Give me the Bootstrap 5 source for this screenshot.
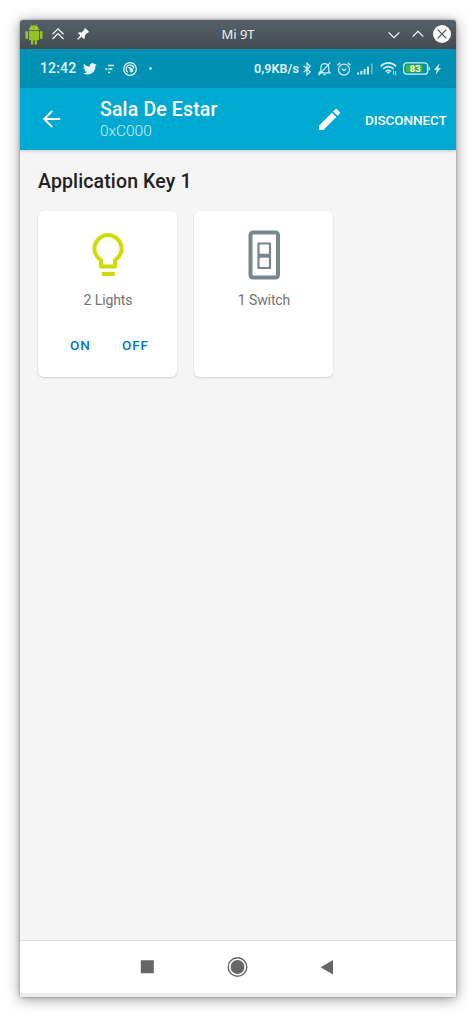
<!DOCTYPE html>
<html lang="en">
<head>
<meta charset="utf-8">
<meta name="viewport" content="width=device-width, initial-scale=1">
<title>Mi 9T</title>
<link href="https://cdn.jsdelivr.net/npm/bootstrap@5.3.0/dist/css/bootstrap.min.css" rel="stylesheet">
<style>
body{font-family:Roboto,"Liberation Sans",sans-serif;background:#fff}
svg{display:block;flex:none}
.stage{padding:20px;height:1017px;overflow:hidden}
.phone{width:436px;height:977px;border-radius:3px 3px 1px 1px;box-shadow:0 2px 14px rgba(0,0,0,.42),0 0 3px rgba(0,0,0,.35);background:#f5f5f5;overflow:hidden}
.titlebar{height:29px;background:linear-gradient(#566067,#454c54);color:#fcfcfc;padding:0 5px}
.titlebar .side{width:190px}
.titlebar .caption{font:13px/29px "Noto Sans",sans-serif;color:#eff0f1;width:46px}
.status{height:39px;background:#0090b4;color:#e3f5f9;padding:0 15px 0 20px}
.clock{font-size:14px;font-weight:500;letter-spacing:.15px;width:43px;line-height:39px}
.speed{font-size:12.5px;font-weight:600;letter-spacing:.1px;width:50px;line-height:39px}
.toolbar{height:62px;background:#00a9d1;color:#fff;padding:0 8px 0 20px;position:relative;box-shadow:0 1px 3px rgba(0,0,0,.2)}
.toolbar h1{font-size:19.5px;font-weight:500;line-height:23px;letter-spacing:.15px;margin:0}
.toolbar .sub{font-size:15.5px;font-weight:300;line-height:20px;color:#d0f1f8;letter-spacing:-.05px}
.headings{margin-left:38px;padding-top:1px}
.disconnect{font-size:13.5px;font-weight:500;line-height:20px;letter-spacing:-.1px;width:83px;margin:1px 0 0 25px;white-space:nowrap}
.content-area{padding:20px 17px 0 18px}
.content-area h2{font-size:19.5px;font-weight:500;line-height:24px;letter-spacing:.13px;color:#212121;margin:0 0 17px}
.tile{width:139px;height:166px;border:0;border-radius:6px;background:#fff;box-shadow:0 1px 2px rgba(0,0,0,.17);padding-top:14px}
.tile .label{font-size:14px;line-height:20px;letter-spacing:-.1px;color:#737373;margin-top:5px;padding-left:1px}
.tile .act{font-size:13.5px;font-weight:500;line-height:20px;letter-spacing:.95px;color:#0077c0;padding:0;border:0;background:none}
.navkeys{height:57px;background:#fff;border-top:1px solid #e0e0e0;border-bottom:4px solid #ededed;padding-left:120px}
</style>
</head>
<body>
<div class="stage">
<div class="phone d-flex flex-column">
  <header class="titlebar d-flex align-items-center justify-content-between">
    <div class="side d-flex align-items-center">
      <svg width="18" height="21" viewBox="0 0 18 21" fill="#97c024"><path d="M4 6.200C4 3.700 5.400 2.300 6.500 1.700L5.400.3l.4-.3L7 1.500a6 6 0 0 1 4 0L12.200 0l.4.3-1.100 1.400c1.100.6 2.500 2 2.500 4.500zM4 7h10v8.300q0 1-1 1h-1V20q0 .8-1.100.8T9.700 20v-3.700H8.300V20q0 .8-1.200.8T6 20v-3.700H5q-1 0-1-1z"/><rect x=".4" y="7" width="2.700" height="8" rx="1.200"/><rect x="14.900" y="7" width="2.700" height="8" rx="1.200"/><circle cx="6.800" cy="4" r=".55" fill="#fff"/><circle cx="11.200" cy="4" r=".55" fill="#fff"/></svg>
      <svg style="margin:-1px 0 0 9px" width="12" height="12" viewBox="0 0 12 12" fill="none" stroke="#fcfcfc" stroke-width="1.200"><path d="M.5 6.300 6 .9l5.500 5.400M.5 11 6 5.600 11.500 11"/></svg>
      <svg style="margin:-2px 0 0 13px" width="12" height="12" viewBox="0 0 12 12" fill="#fcfcfc"><path d="M8.200 0 12 3.700l-1.100 1.200-.6-.2-2.500 2.900.1 2.500-1 .9-2.300-2.200-3.700 3-.7-.7 3.100-3.600L1.100 5.300l.9-1 2.700.1L7.300 1.800 7.100 1z"/></svg>
    </div>
    <div class="caption text-center text-nowrap">Mi 9T</div>
    <div class="side d-flex align-items-center justify-content-end">
      <svg width="12" height="8" viewBox="0 0 12 8" fill="none" stroke="#fcfcfc" stroke-width="1.200"><path d="M.6 1.300 6 6.700l5.400-5.400"/></svg>
      <svg style="margin:-1px 0 0 12px" width="12" height="8" viewBox="0 0 12 8" fill="none" stroke="#fcfcfc" stroke-width="1.200"><path d="M.6 6.700 6 1.300l5.400 5.400"/></svg>
      <svg style="margin:-1px 0 0 9px" width="18" height="18" viewBox="0 0 18 18"><circle cx="9" cy="9" r="9" fill="#fcfcfc"/><path d="m4.700 4.700 8.600 8.600m0-8.600-8.600 8.600" stroke="#4b535b" stroke-width="1.200"/></svg>
    </div>
  </header>

  <div class="status d-flex align-items-center">
    <div class="clock text-nowrap">12:42</div>
    <svg width="14" height="12" viewBox="0 0 24 20" fill="#e3f5f9"><path d="M23.600 2.400a9 9 0 0 1-2.700.8A4.800 4.800 0 0 0 23 .5a9 9 0 0 1-3 1.200 4.800 4.800 0 0 0-8.300 4.400A13.600 13.600 0 0 1 1.700 1a4.800 4.800 0 0 0 1.500 6.500A4.800 4.800 0 0 1 1 6.900c0 2.400 1.600 4.300 3.800 4.800a5 5 0 0 1-2.100.1 4.800 4.800 0 0 0 4.500 3.400A9.700 9.700 0 0 1 .1 17.100 13.600 13.600 0 0 0 21.200 5z"/></svg>
    <svg style="margin-left:8px" width="10" height="10" viewBox="0 0 10 10" fill="none" stroke="#e3f5f9" stroke-width="1.700"><path d="M3 1.500h6M.4 5h2M3.500 5H7.500M3.200 8.500h2"/></svg>
    <svg style="margin-left:8px" width="14" height="14" viewBox="0 0 14 14" fill="none" stroke="#e3f5f9"><circle cx="7" cy="7" r="6.300" stroke-width="1.300"/><path d="M4.800 10.300A4 4 0 0 1 6 3.200c2-.5 4.500.6 4.900 3.200" stroke-width="1.300"/><path d="M4.600 5.200c2-.7 4.600.2 6 3.100-.5 1.200-1.300 2-2.400 2.400L5.900 8.300l2.200.3z" fill="#e3f5f9" stroke="none"/></svg>
    <svg style="margin-left:12px" width="3" height="3" viewBox="0 0 3 3"><circle cx="1.500" cy="1.500" r="1.300" fill="#e3f5f9"/></svg>
    <div class="speed text-nowrap ms-auto">0,9KB/s</div>
    <svg style="margin-left:-1px" width="8" height="14" viewBox="0 0 8 14" fill="none" stroke="#d4f0f6" stroke-width="1.200"><path d="m.6 3.800 6.600 6L4 13V1l3.200 3.200-6.600 6"/></svg>
    <svg style="margin-left:7px" width="13" height="14" viewBox="0 0 13 14" fill="none" stroke="#d4f0f6" stroke-width="1.200"><path d="M1 10.900h11L10.700 9V5.600C10.700 3.200 9 1.700 6.800 1.700S2.900 3.200 2.900 5.600V9zM5.500 12.700h2.200M.5 13.300 12.300.6"/></svg>
    <svg style="margin-left:6px" width="14" height="14" viewBox="0 0 14 14" fill="none" stroke="#d4f0f6" stroke-width="1.200"><circle cx="7" cy="7.600" r="5.500"/><path d="M.5 3.300 3.300.7M13.500 3.300 10.700.7M4.700 6.500 7 8.700l2.300-2"/></svg>
    <svg style="margin-left:6px" width="16" height="12" viewBox="0 0 16 12" fill="#d4f0f6"><path d="M0 9.500h2v2H0zM3.300 8h2v3.500h-2zM6.600 6h2v5.500h-2zM10 3.500h2v8h-2z"/><path d="M14 .5h1.700v11H14z" opacity=".45"/></svg>
    <svg style="margin-left:7px" width="17" height="15" viewBox="0 0 17 15" fill="none" stroke="#d4f0f6" stroke-width="1.700"><path d="M.6 5.300c4.500-4.600 11-4.600 15.400 0M3.100 8c3-3.100 7.400-3.100 10.400 0M5.600 10.500c1.600-1.700 3.800-1.700 5.400 0"/><path d="m8.300 13-1.700-1.800c1-1 2.400-1 3.400 0z" fill="#d4f0f6" stroke="none"/><path d="M13.600 9.800v3.700M15.500 10.500v3.700" stroke-width=".9"/></svg>
    <svg style="margin-left:6px" width="28" height="13" viewBox="0 0 28 13"><rect x=".6" y=".8" width="24" height="11.400" rx="3" fill="none" stroke="#d4f0f6" stroke-width="1.300"/><rect x="2.500" y="2.700" width="17" height="7.600" rx="1" fill="#43b52c"/><path d="M26.300 4.700v3.600" stroke="#d4f0f6" stroke-width="1.200"/><text x="12.300" y="9.800" text-anchor="middle" font-size="9.500" font-weight="700" fill="#effbe9">83</text></svg>
    <svg style="margin-left:3px" width="7" height="12" viewBox="0 0 7 12" fill="#d4f0f6"><path d="M5.500.3.100 6.800h2.700L1.500 11.800 7 5H4.200z"/></svg>
  </div>

  <nav class="toolbar d-flex align-items-center">
    <svg style="margin-left:2px" width="20" height="20" viewBox="0 0 20 20" fill="none" stroke="#fff" stroke-width="2"><path d="M18.200 10H2.300M10.300 1.900 2.200 10l8.100 8.100"/></svg>
    <div class="headings text-nowrap">
      <h1>Sala De Estar</h1>
      <div class="sub">0xC000</div>
    </div>
    <svg class="ms-auto" width="21" height="21" viewBox="0 0 18 18" fill="#fff"><path d="M0 14.250V18h3.750L14.810 6.940l-3.750-3.750zM17.710 4.040a1 1 0 0 0 0-1.410L15.370.29a1 1 0 0 0-1.410 0l-1.830 1.830 3.750 3.750z"/></svg>
    <div class="disconnect">DISCONNECT</div>
  </nav>

  <main class="content-area flex-grow-1">
    <h2>Application Key 1</h2>
    <div class="d-flex" style="gap:17px">
      <section class="card tile align-items-center">
        <svg width="58" height="60" viewBox="0 0 58 60" fill="none"><path d="M29 10.100a13.500 13.500 0 0 0-7.100 25v6.400h14.200v-6.400a13.500 13.500 0 0 0-7.100-25z" stroke="#cddc00" stroke-width="4" stroke-linejoin="round"/><path d="M22.700 47h13.200v2.500q0 1.500-1.500 1.500H24.200q-1.500 0-1.500-1.500z" fill="#cddc00"/></svg>
        <div class="label">2 Lights</div>
        <div class="d-flex justify-content-center" style="gap:31px;margin-top:25px;padding-left:4px">
          <button class="act" type="button">ON</button>
          <button class="act" type="button">OFF</button>
        </div>
      </section>
      <section class="card tile align-items-center">
        <svg width="58" height="60" viewBox="0 0 58 60" fill="none" stroke="#768791"><rect x="15.500" y="7.500" width="27.500" height="45" rx="2.500" stroke-width="4"/><path d="M23.500 18.500h11.500v24.500H23.500z" stroke-width="2.200"/><path d="M23 30.700h12.500" stroke-width="4"/></svg>
        <div class="label">1 Switch</div>
      </section>
    </div>
  </main>

  <footer class="navkeys d-flex align-items-center">
    <svg width="14" height="14" viewBox="0 0 14 14"><rect x=".8" y=".2" width="13" height="13" rx=".5" fill="#666"/></svg>
    <svg style="margin-left:73px" width="21" height="21" viewBox="0 0 21 21"><circle cx="10.500" cy="10" r="9.300" fill="none" stroke="#666" stroke-width="1.400"/><circle cx="10.500" cy="10" r="6.900" fill="#666"/></svg>
    <svg style="margin-left:72px" width="13" height="15" viewBox="0 0 13 15"><path d="M13 0v14.400L.6 7.200z" fill="#666"/></svg>
  </footer>
</div>
</div>
<script src="https://cdn.jsdelivr.net/npm/bootstrap@5.3.0/dist/js/bootstrap.bundle.min.js"></script>
</body>
</html>
